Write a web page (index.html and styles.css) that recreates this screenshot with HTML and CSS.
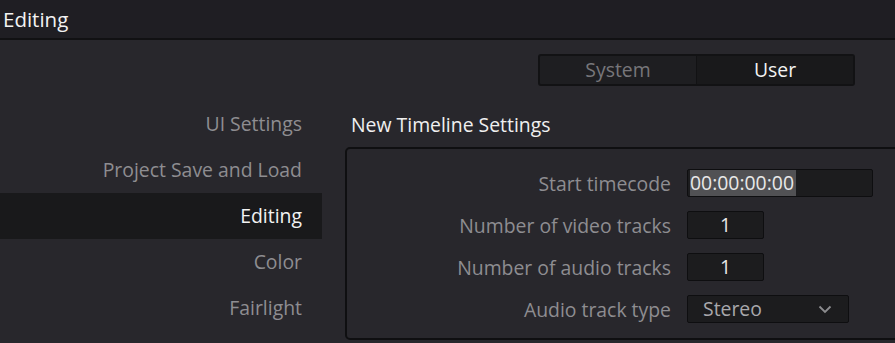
FILE: index.html
```html
<!DOCTYPE html>
<html lang="en">
<head>
    <meta charset="UTF-8">
    <title>Preferences - Editing</title>
    <link rel="stylesheet" href="styles.css">
</head>
<body>

<div class="header">Editing</div>

<div class="main">
    <!-- Menú lateral -->
    <ul class="sidebar">
        <li>UI Settings</li>
        <li>Project Save and Load</li>
        <li class="active">Editing</li>
        <li>Color</li>
        <li>Fairlight</li>
    </ul>

    <div class="content">
        <div class="toggle-row">
            <div class="toggle">
                <div class="toggle-btn">System</div>
                <div class="toggle-btn selected">User</div>
            </div>
        </div>

        <h3 class="section-title">New Timeline Settings</h3>

        <div class="panel">
            <div class="field">
                <span class="label">Start timecode</span>
                <div class="input timecode"><span class="sel">00:00:00:00</span></div>
            </div>
            <div class="field">
                <span class="label">Number of video tracks</span>
                <div class="input number">1</div>
            </div>
            <div class="field">
                <span class="label">Number of audio tracks</span>
                <div class="input number">1</div>
            </div>
            <div class="field">
                <span class="label">Audio track type</span>
                <div class="input dropdown">
                    <span>Stereo</span>
                    <svg width="14" height="9" viewBox="0 0 14 9"><path d="M1.5 1.5 L7 7 L12.5 1.5" fill="none" stroke="#8c8c8f" stroke-width="1.8"/></svg>
                </div>
            </div>
        </div>
    </div>
</div>

</body>
</html>
```

FILE: styles.css
```css
body {
    margin: 0;
    width: 895px;
    height: 343px;
    overflow: hidden;
    background-color: #28272c;
    font-family: "Open Sans", sans-serif;
    font-size: 19.4px;
    color: #8e8d91;
}

.header {
    height: 38px;
    line-height: 38px;
    padding-left: 3px;
    background-color: #1f1e23;
    border-bottom: 2px solid #111113;
    color: #f2f2f2;
    font-size: 20.5px;
}

.main {
    display: flex;
}

/* Menú lateral */
.sidebar {
    list-style: none;
    margin: 0;
    padding: 61px 0 0 0;
    width: 322px;
    flex-shrink: 0;
}

.sidebar li {
    height: 46px;
    line-height: 46px;
    text-align: right;
    padding-right: 20px;
}

.sidebar li.active {
    background-color: #19191b;
    color: #f2f2f2;
}

.content {
    flex: 1;
    min-width: 0;
    padding-left: 23px;
    overflow: hidden;
}

.toggle-row {
    display: flex;
    justify-content: flex-end;
    padding: 14px 40px 0 0;
}

.toggle {
    display: flex;
    width: 313px;
    height: 28px;
    border: 2px solid #121214;
    border-radius: 3px;
    background-color: #1e1e21;
}

.toggle-btn {
    flex: 1;
    text-align: center;
    line-height: 28px;
    color: #77767a;
}

.toggle-btn + .toggle-btn {
    border-left: 1px solid #121214;
}

.toggle-btn.selected {
    background-color: #19191b;
    color: #f2f2f2;
}

.section-title {
    margin: 27px 0 0 6px;
    font-size: 19.4px;
    font-weight: normal;
    color: #f0f0f0;
    line-height: 24px;
}

.panel {
    margin-top: 10px;
    width: 600px;
    height: 193px;
    border: 2px solid #0f0f11;
    border-radius: 5px;
    padding-top: 20px;
    box-sizing: border-box;
}

.field {
    display: flex;
    align-items: center;
    height: 28px;
    margin-bottom: 14px;
}

.label {
    width: 324px;
    text-align: right;
    margin-right: 16px;
    white-space: nowrap;
}

.input {
    height: 28px;
    box-sizing: border-box;
    background-color: #1c1c1e;
    border: 1px solid #0e0e10;
    border-radius: 2px;
    color: #e8e8e8;
    line-height: 26px;
}

.timecode {
    width: 186px;
    padding-left: 2px;
}

.timecode .sel {
    display: inline-block;
    background-color: #515154;
    padding-right: 2px;
}

.number {
    width: 77px;
    text-align: center;
}

.dropdown {
    width: 162px;
    display: flex;
    justify-content: space-between;
    align-items: center;
    padding: 0 16px 0 15px;
    color: #a9a8ac;
}
```
